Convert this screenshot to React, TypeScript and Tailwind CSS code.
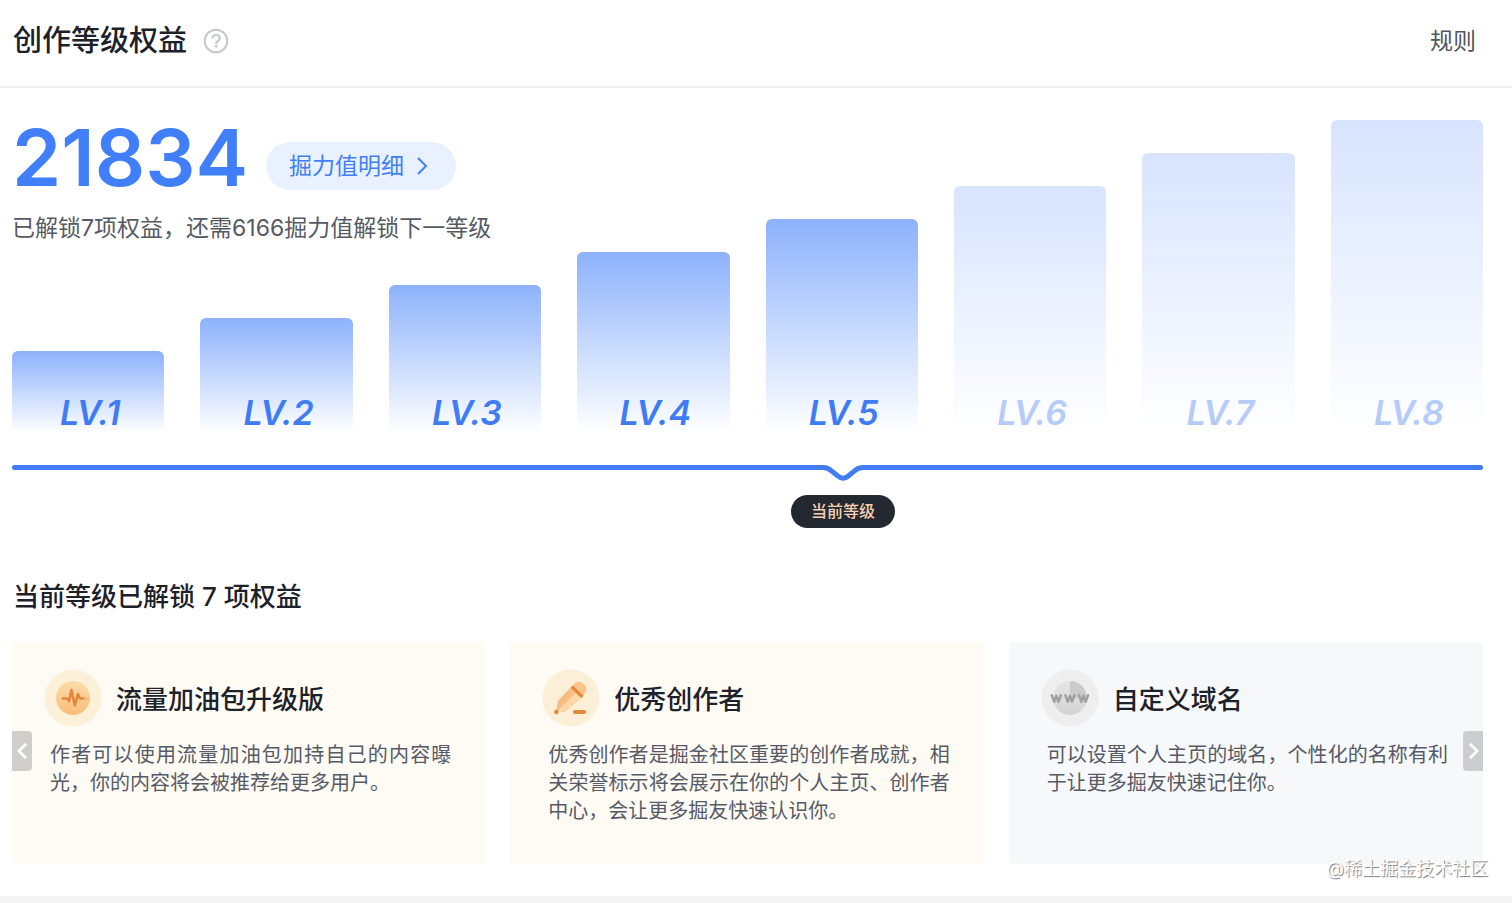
import type { ReactNode } from "react";

const LEVELS = [1, 2, 3, 4, 5, 6, 7, 8];
const CURRENT_LEVEL = 5;
const BASE_HEIGHT = 82;
const STEP_HEIGHT = 33;

function HelpIcon() {
  return (
    <svg viewBox="0 0 26 26" className="size-[26px]" fill="none" stroke="#c4c7cc" strokeWidth="2" aria-hidden="true">
      <circle cx="13" cy="13" r="11.3" />
      <path d="M9.4 10.6c0-2.2 1.6-3.6 3.7-3.6s3.6 1.3 3.6 3.2c0 1.3-.7 2-1.8 2.8-1.2.8-1.8 1.3-1.8 2.9" strokeWidth="2.2" />
      <circle cx="13.1" cy="18.3" r="1.4" fill="#c4c7cc" stroke="none" />
    </svg>
  );
}

function PulseIcon() {
  return (
    <svg viewBox="0 0 58 58" className="size-[58px]" fill="none" aria-hidden="true">
      <defs>
        <linearGradient id="pulse-disc" x1="0" y1="0" x2="0" y2="1">
          <stop offset="0" stopColor="#fbdcaa" />
          <stop offset="1" stopColor="#f8bd78" />
        </linearGradient>
      </defs>
      <circle cx="29" cy="29" r="28.5" fill="#fdf0d9" />
      <circle cx="29" cy="29" r="17" fill="url(#pulse-disc)" />
      <path
        d="M18.7 29.6h4.6l1.7 2.6 2.4-11.2 3.4 15.5 3.2-11.5 2 4.6h4"
        stroke="#e5853a"
        strokeWidth="2.5"
        strokeLinecap="round"
        strokeLinejoin="round"
      />
      <path d="M40 29.6h5" stroke="#f6b978" strokeWidth="1.4" strokeLinecap="round" />
    </svg>
  );
}

function PencilIcon() {
  return (
    <svg viewBox="0 0 58 58" className="size-[58px]" fill="none" aria-hidden="true">
      <circle cx="29" cy="29" r="28.5" fill="#fcefd8" />
      <path d="M28.3 18.7L16 31.8l-2 11.7 9.5-1L38.5 29.5z" fill="#f8bd80" />
      <path d="M33.5 24l5 5.5L23.5 42.5l-9.5 1z" fill="#fad7a4" />
      <path d="M31 15.7l2.2-2c2.5-1.7 5.8-1.3 8.5 1.2 2.9 2.7 3.4 5.8 1.6 8.5l-2.1 2.8z" fill="#f9c48c" />
      <path d="M29.7 17.5l10.800 10.500" stroke="#e8873c" strokeWidth="3.6" />
      <circle cx="14.3" cy="43" r="2.2" fill="#e5853a" />
      <path d="M33 43h9" stroke="#e8873c" strokeWidth="4.2" strokeLinecap="round" />
    </svg>
  );
}

function DomainIcon() {
  return (
    <svg viewBox="0 0 58 58" className="size-[58px]" fill="none" aria-hidden="true">
      <defs>
        <linearGradient id="domain-disc" x1="0" y1="0" x2="0" y2="1">
          <stop offset="0" stopColor="#e6e6e6" />
          <stop offset="1" stopColor="#d3d3d3" />
        </linearGradient>
      </defs>
      <circle cx="29" cy="29" r="28.5" fill="#eeeeee" />
      <circle cx="29" cy="29" r="17" fill="url(#domain-disc)" />
      <path d="M29 12a17 17 0 0 1 17 17H29z" fill="#cbcbcb" />
      <path
        d="M10.8 26.3l2.3 6.4 2.2-5.8 2.2 5.8 2.3-6.4M24.4 26.3l2.3 6.4 2.2-5.8 2.2 5.8 2.3-6.4M38 26.3l2.3 6.4 2.2-5.8 2.2 5.8 2.3-6.4"
        stroke="#a0a0a0"
        strokeWidth="2.5"
        strokeLinecap="round"
        strokeLinejoin="round"
      />
    </svg>
  );
}

function Chevron({ flip = false, className }: { flip?: boolean; className: string }) {
  return (
    <svg viewBox="0 0 12 20" className={className} fill="none" stroke="currentColor" aria-hidden="true">
      <path d={flip ? "M10 2L2 10l8 8" : "M2 2l8 8-8 8"} />
    </svg>
  );
}

function LevelBar({ level }: { level: number }) {
  const unlocked = level <= CURRENT_LEVEL;
  return (
    <li
      className={
        unlocked
          ? "flex items-end justify-center rounded-t-md bg-linear-to-b from-[#8db1fb] to-white pb-1 pl-1"
          : "flex items-end justify-center rounded-t-md bg-linear-to-b from-[#d8e4fe] to-white pb-1 pl-1"
      }
      style={{ height: BASE_HEIGHT + STEP_HEIGHT * (level - 1) }}
    >
      <span
        className={
          unlocked
            ? "text-[34px] leading-8 font-semibold text-[#3f7cf4] italic"
            : "text-[34px] leading-8 font-semibold text-[#b5cbfa] italic"
        }
      >
        LV.{level}
      </span>
    </li>
  );
}

function LevelTrack() {
  return (
    <div className="mt-[31px] flex h-16 items-start">
      <div className="mt-px h-[5px] flex-[567] rounded-l-full bg-[#407df3]" />
      <div className="relative w-11 shrink-0">
        <svg viewBox="0 0 44 18" className="h-[18px] w-11" fill="none" aria-hidden="true">
          <path
            d="M0 3.5h2c4 0 6 1 8.5 3.3l6.5 5.4c3.3 2.7 6.7 2.7 10 0l6.500-5.400C36 4.500 38 3.500 42 3.500h2"
            stroke="#407df3"
            strokeWidth="5"
          />
        </svg>
        <span className="absolute top-[31px] left-1/2 -translate-x-1/2 rounded-full bg-[#242830] px-5 pt-1 pb-[5px] text-base leading-6 font-medium whitespace-nowrap text-[#f7d0b4]">
          当前等级
        </span>
      </div>
      <div className="mt-px h-[5px] flex-[433] rounded-r-full bg-[#407df3]" />
    </div>
  );
}

function BenefitCard({
  icon,
  title,
  tone,
  children,
}: {
  icon: ReactNode;
  title: string;
  tone: "warm" | "cool";
  children: ReactNode;
}) {
  return (
    <article
      className={
        tone === "warm"
          ? "min-h-[222px] rounded bg-[#fefbf4] pt-[27px] pr-[35px] pb-8 pl-8"
          : "min-h-[222px] rounded bg-[#f6f8fa] pt-[27px] pr-[35px] pb-8 pl-8"
      }
    >
      <div className="flex items-center gap-3.5">
        {icon}
        <h3 className="pt-[3px] text-[26px] leading-9 font-medium text-[#1d2129]">{title}</h3>
      </div>
      <p className="mt-3.5 pl-1.5 text-justify text-[20px] leading-7 text-[#565a66]">{children}</p>
    </article>
  );
}

export default function App() {
  return (
    <div className="min-h-screen bg-[#f4f4f4] font-['Inter','Noto_Sans_CJK_SC',sans-serif]">
      <main className="relative bg-white pb-8">
        <header className="flex h-[88px] items-start justify-between border-b-2 border-[#eeeeef] pt-[21px] pr-9 pl-[13px]">
          <div className="flex items-center gap-4">
            <h1 className="text-[29px] leading-10 font-medium text-[#1d2129]">创作等级权益</h1>
            <button type="button" aria-label="等级说明">
              <HelpIcon />
            </button>
          </div>
          <a href="#rules" className="text-[23px] leading-10 text-[#51555f]">
            规则
          </a>
        </header>

        <section className="pt-8 pr-[29px] pl-3" aria-label="创作等级">
          <div className="grid">
            <div className="z-10 col-start-1 row-start-1 justify-self-start">
              <div className="flex items-center gap-[18px]">
                <strong className="text-[79px] leading-[74px] font-semibold text-[#407ff9]">21834</strong>
                <a
                  href="#details"
                  className="mt-[18px] flex h-12 items-center gap-3 rounded-full bg-[#eaf1fe] pr-7 pl-[23px] text-[23px] text-[#407ff9]"
                >
                  掘力值明细
                  <Chevron className="h-5 w-3 stroke-2" />
                </a>
              </div>
              <p className="mt-4 text-[23px] leading-9 text-[#565a63]">已解锁7项权益，还需6166掘力值解锁下一等级</p>
            </div>
            <ol className="col-start-1 row-start-1 grid grid-cols-8 items-end gap-9">
              {LEVELS.map((level) => (
                <LevelBar key={level} level={level} />
              ))}
            </ol>
          </div>
          <LevelTrack />
        </section>

        <section className="pt-[49px] pr-[29px] pl-3">
          <h2 className="pl-px text-[26px] leading-10 font-medium text-[#1d2129]">当前等级已解锁 7 项权益</h2>
          <div className="relative mt-[25px]">
            <div className="grid grid-cols-3 gap-6">
              <BenefitCard icon={<PulseIcon />} title="流量加油包升级版" tone="warm">
                作者可以使用流量加油包加持自己的内容曝光，你的内容将会被推荐给更多用户。
              </BenefitCard>
              <BenefitCard icon={<PencilIcon />} title="优秀创作者" tone="warm">
                优秀创作者是掘金社区重要的创作者成就，相关荣誉标示将会展示在你的个人主页、创作者中心，会让更多掘友快速认识你。
              </BenefitCard>
              <BenefitCard icon={<DomainIcon />} title="自定义域名" tone="cool">
                可以设置个人主页的域名，个性化的名称有利于让更多掘友快速记住你。
              </BenefitCard>
            </div>
            <button
              type="button"
              aria-label="上一页"
              className="absolute top-[89px] left-0 flex h-10 w-5 items-center justify-center rounded-r bg-[#cfcecb] text-white"
            >
              <Chevron flip className="h-[18px] w-[11px] stroke-3" />
            </button>
            <button
              type="button"
              aria-label="下一页"
              className="absolute top-[89px] right-0 flex h-10 w-5 items-center justify-center rounded-l bg-[#cccdcf] text-white"
            >
              <Chevron className="h-[18px] w-[11px] stroke-3" />
            </button>
          </div>
        </section>

        <span className="absolute right-6 bottom-[15px] text-lg leading-6 text-white [text-shadow:1px_1px_1px_#777]">
          @稀土掘金技术社区
        </span>
      </main>
    </div>
  );
}
